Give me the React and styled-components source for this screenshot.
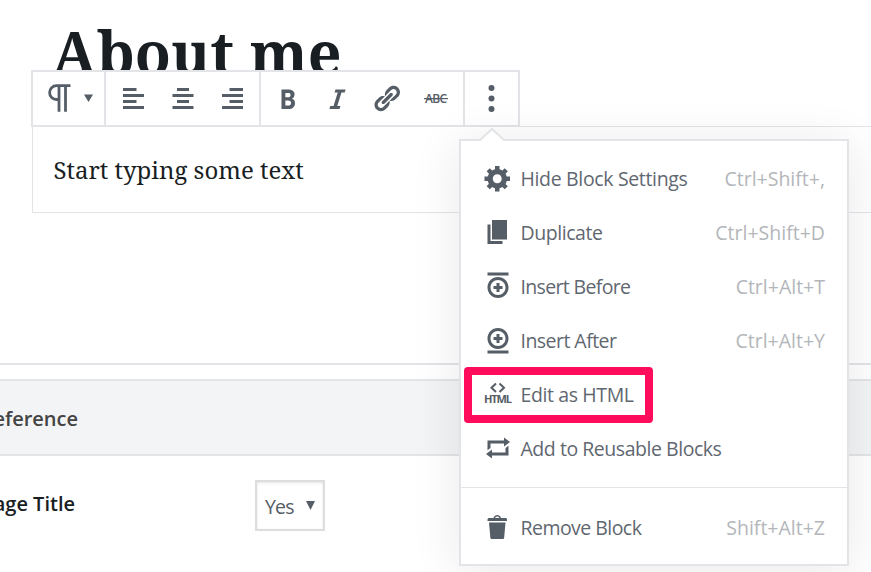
import React from "react";
import styled, { createGlobalStyle } from "styled-components";

const GlobalStyle = createGlobalStyle`
  * { box-sizing: border-box; }
  html, body { margin: 0; background: #fff; }
  body { overflow: hidden; font-family: "Open Sans", "Noto Sans", sans-serif; color: #555d66; }
`;

const Page = styled.main`
  position: relative;
  width: 871px;
  height: 572px;
  overflow: hidden;
  display: flex;
  flex-direction: column;
`;

const Title = styled.h1`
  margin: 0;
  height: 126px;
  padding: 10px 0 0 52px;
  font: 700 59px/84px "Noto Serif", "DejaVu Serif Condensed", "DejaVu Serif", serif;
  color: #191e23;
  white-space: nowrap;
`;

const Block = styled.section`
  height: 87px;
  margin: 0 -2px 150px 32px;
  padding: 22px 20.5px;
  border: 1px solid #e2e4e7;
`;

const Paragraph = styled.p`
  margin: 0;
  font: 400 24px/42px "Noto Serif", "DejaVu Serif Condensed", "DejaVu Serif", serif;
  color: #191e23;
  white-space: nowrap;
`;

const MetaArea = styled.section`
  border-top: 2px solid #e2e4e7;
  padding-top: 14px;
`;

const MetaHeader = styled.h2`
  margin: 0;
  height: 77px;
  padding-top: 2px;
  display: flex;
  align-items: center;
  border: solid #e2e4e7;
  border-width: 2px 0;
  background: #f3f4f5;
  color: #444;
  font-size: 20px;
  font-weight: 600;
`;

const Clipped = styled.span`
  width: ${(p) => p.$width}px;
  display: flex;
  justify-content: flex-end;
  white-space: nowrap;
`;

const Field = styled.div`
  display: flex;
  align-items: center;
  padding-top: 24px;
  color: #191e23;
  font-size: 20px;
  line-height: 27px;
  font-weight: 600;

  ${Clipped} { padding-bottom: 4px; }
`;

const Select = styled.button`
  width: 70px;
  height: 51px;
  margin-left: 180px;
  padding: 1px 8px 0 8px;
  display: flex;
  align-items: center;
  justify-content: space-between;
  border: 2px solid #ddd;
  background: #fff;
  box-shadow: inset 0 1px 3px rgba(0, 0, 0, 0.1);
  color: #555d66;
  font: 400 19.5px "Open Sans", sans-serif;
  letter-spacing: -0.8px;
`;

const Toolbar = styled.div`
  position: absolute;
  left: 31px;
  top: 70px;
  height: 57px;
  display: flex;
  background: #fff;
  border: 2px solid #e2e4e7;
`;

const ToolGroup = styled.div`
  width: ${(p) => p.$width}px;
  padding: 11px 0 0 ${(p) => p.$inset}px;
  display: flex;
  align-items: flex-start;
  gap: 20px;
  & + & { border-left: 2px solid #e2e4e7; }
`;

const Glyph = styled.svg`
  display: block;
  flex: none;
  width: ${(p) => p.$w || 30}px;
  height: ${(p) => p.$h || 30}px;
  fill: #555d66;
  overflow: visible;
`;

const Popover = styled.div`
  position: absolute;
  left: 459px;
  top: 139px;
  width: 390px;
  height: 427px;
  background: #fff;
  border: 2px solid #e2e4e7;
  box-shadow: 0 4.5px 45px rgba(25, 30, 35, 0.1);
`;

const Arrow = styled.svg`
  position: absolute;
  left: 18px;
  top: -13px;
  width: 26px;
  height: 14px;
`;

const MenuGroup = styled.div`
  padding: ${(p) => p.$pad};
  & + & { border-top: 1px solid #e2e4e7; }
`;

const MenuItem = styled.div`
  height: 54px;
  padding: 0 22px;
  display: flex;
  align-items: center;
  position: relative;
  font-size: 19.5px;
  font-weight: 400;
  white-space: nowrap;
`;

const Label = styled.span`
  margin-left: 7.5px;
  color: #5f6770;
  letter-spacing: ${(p) => p.$spacing}px;
`;

const Shortcut = styled.span`
  margin-left: auto;
  color: #b3b6ba;
  letter-spacing: ${(p) => p.$spacing}px;
`;

const Highlight = styled.div`
  position: absolute;
  left: 3px;
  top: 0;
  width: 189px;
  height: 56px;
  border: 8px solid #ff0c5c;
  border-radius: 4px;
`;

const icons = {
  left: "M12 5V3H3v2h9zm5 4V7H3v2h14zm-5 4v-2H3v2h9zm5 4v-2H3v2h14z",
  center: "M14 5V3H6v2h8zm3 4V7H3v2h14zm-3 4v-2H6v2h8zm3 4v-2H3v2h14z",
  right: "M17 5V3H8v2h9zm0 4V7H3v2h14zm0 4v-2H8v2h9zm0 4v-2H3v2h14z",
  bold: "M6 4v13h4.54c1.37 0 2.46-.33 3.26-1 .8-.66 1.2-1.58 1.2-2.77 0-.84-.17-1.51-.51-2.01s-.9-.85-1.67-1.03v-.09c.57-.1 1.02-.4 1.36-.9s.51-1.13.51-1.91c0-1.14-.39-1.98-1.17-2.5C12.75 4.26 11.5 4 9.78 4H6zm2.57 5.15V6.26h1.36c.73 0 1.27.11 1.61.32.34.22.51.58.51 1.07 0 .54-.16.92-.47 1.15s-.82.35-1.51.35h-1.5zm0 2.19h1.6c1.44 0 2.16.53 2.16 1.61 0 .6-.17 1.05-.51 1.34s-.86.43-1.57.43H8.57v-3.38z",
  italic: "M14.78 6h-2.13l-2.8 9h2.12l-.62 2H4.6l.62-2h2.14l2.8-9H8.03l.62-2h6.75z",
  link: "M17.74 2.76c1.68 1.69 1.68 4.41 0 6.1l-1.53 1.52c-1.12 1.12-2.7 1.47-4.14 1.09l2.62-2.61.76-.77.76-.76c.84-.84.84-2.2 0-3.04-.84-.85-2.2-.85-3.04 0l-.77.76-3.38 3.38c-.37-1.44-.02-3.02 1.1-4.14l1.52-1.53c1.69-1.68 4.42-1.68 6.1 0zM8.59 13.43l5.34-5.34c.42-.42.42-1.1 0-1.52-.44-.43-1.13-.39-1.53 0l-5.33 5.34c-.42.42-.42 1.1 0 1.52.44.43 1.13.39 1.52 0zm-.76 2.29l4.14-4.15c.38 1.44.03 3.02-1.09 4.14l-1.52 1.53c-1.69 1.68-4.41 1.68-6.1 0-1.68-1.68-1.68-4.42 0-6.1l1.53-1.52c1.12-1.12 2.7-1.47 4.14-1.1l-4.14 4.15c-.85.84-.85 2.2 0 3.05.84.84 2.2.84 3.04 0z",
  gear: "M18 12h-2.18c-.17.7-.44 1.35-.81 1.93l1.54 1.54-2.1 2.1-1.54-1.54c-.58.36-1.23.63-1.91.79V19H8v-2.18c-.68-.16-1.33-.43-1.91-.79l-1.54 1.54-2.12-2.12 1.54-1.54c-.36-.58-.63-1.23-.79-1.91H1V9.03h2.17c.16-.7.44-1.35.8-1.94L2.43 5.55l2.1-2.1 1.54 1.54c.58-.37 1.24-.64 1.93-.81V2h3v2.18c.68.16 1.33.43 1.91.79l1.54-1.54 2.12 2.12-1.54 1.54c.36.59.64 1.24.8 1.94H18V12zm-8.5 1.5c1.66 0 3-1.34 3-3s-1.34-3-3-3-3 1.34-3 3 1.34 3 3 3z",
  duplicate: "M6 15V2h10v13H6zm-1 1h8v2H3V5h2v11z",
  before: "M11 8H9v2H7v2h2v2h2v-2h2v-2h-2V8zm-1-4c-3.9 0-7 3.1-7 7s3.1 7 7 7 7-3.1 7-7-3.1-7-7-7zm0 12c-2.8 0-5-2.2-5-5s2.2-5 5-5 5 2.2 5 5-2.2 5-5 5zM3 1h14v2H3V1z",
  after: "M9 12h2v-2h2V8h-2V6H9v2H7v2h2v2zm1 4c3.9 0 7-3.1 7-7s-3.1-7-7-7-7 3.1-7 7 3.1 7 7 7zm0-12c2.8 0 5 2.2 5 5s-2.2 5-5 5-5-2.2-5-5 2.2-5 5-5zM3 19h14v-2H3v2z",
  reusable: "M5 7v3l-2 1.5V5h11V3l4 3.01L14 9V7H5zm10 6v-3l2-1.5V15H6v2l-4-3.01L6 11v2h9z",
  trash: "M12 4h3c.6 0 1 .4 1 1v1H3V5c0-.6.5-1 1-1h3c.2-1.1 1.3-2 2.5-2s2.3.9 2.5 2zM8 4h3c-.2-.6-.9-1-1.5-1S8.2 3.4 8 4zM4 7h11l-.9 10.1c0 .5-.5.9-1 .9H5.9c-.5 0-.9-.4-1-.9L4 7z",
};

/* dx and dy nudge the drawing by fractions of a pixel inside its box. */
const Icon = ({ name, dx = 0, dy = 0 }) => (
  <Glyph viewBox={`${-dx / 1.5} ${-dy / 1.5} 20 20`}><path d={icons[name]} /></Glyph>
);

const ParagraphIcon = () => (
  <Glyph $w={42} viewBox="0 0 42 30">
    <path d="M23.500 2.700H9.500a6.700 6.700 0 0 0 0 13.800H11.500M12 2.700V28.700M18.500 2.700V28.700" fill="none" stroke="#555d66" strokeWidth="2.800" />
    <path d="M37 11.500h9l-4.500 7.500z" />
  </Glyph>
);

const StrikeIcon = () => (
  <Glyph viewBox="0 0 30 30">
    <text x="3" y="20" fontSize="12" fontFamily="Open Sans" fontWeight="600" textLength="22">ABC</text>
    <path d="M2 15h24v1.200H2z" />
  </Glyph>
);

const MoreIcon = () => (
  <Glyph viewBox="0 0 30 30">
    <circle cx="14.500" cy="5" r="3" />
    <circle cx="14.500" cy="15.500" r="3" />
    <circle cx="14.500" cy="26" r="3" />
  </Glyph>
);

const HtmlIcon = () => (
  <Glyph viewBox="0 0 30 30">
    <path d="M13 4.500l-4.500 4.200 4.500 4.200M16.500 4.500l4.500 4.200-4.500 4.200" fill="none" stroke="#555d66" strokeWidth="2" />
    <text x="1" y="24" fontSize="11" fontFamily="Open Sans" fontWeight="700" textLength="28">HTML</text>
  </Glyph>
);

const menu = [
  { icon: "gear", label: "Hide Block Settings", keys: "Ctrl+Shift+,", ls: -0.34, ks: 0 },
  { icon: "duplicate", label: "Duplicate", keys: "Ctrl+Shift+D", ls: -0.45, ks: 0 },
  { icon: "before", label: "Insert Before", keys: "Ctrl+Alt+T", ls: -0.66, ks: 0 },
  { icon: "after", label: "Insert After", keys: "Ctrl+Alt+Y", ls: -0.54, ks: 0 },
  { icon: "html", label: "Edit as HTML", ls: -0.38, highlighted: true },
  { icon: "reusable", label: "Add to Reusable Blocks", ls: -0.46 },
];
const removal = { icon: "trash", label: "Remove Block", keys: "Shift+Alt+Z", ls: -0.54, ks: 0 };

const Item = ({ icon, label, keys, ls, ks, highlighted }) => (
  <MenuItem>
    {icon === "html" ? <HtmlIcon /> : <Icon name={icon} />}
    <Label $spacing={ls}>{label}</Label>
    {keys && <Shortcut $spacing={ks}>{keys}</Shortcut>}
    {highlighted && <Highlight />}
  </MenuItem>
);

export default function App() {
  return (
    <Page>
      <GlobalStyle />
      <Title>About me</Title>
      <Block><Paragraph>Start typing some text</Paragraph></Block>
      <MetaArea>
        <MetaHeader><Clipped $width={78}>Preference</Clipped></MetaHeader>
        <Field>
          <Clipped $width={75}>Page Title</Clipped>
          <Select>Yes<Glyph $w={9} $h={11} viewBox="0 0 9 11"><path d="M0 0h9L4.500 9z" /></Glyph></Select>
        </Field>
      </MetaArea>
      <Toolbar>
        <ToolGroup $width={71} $inset={14}><ParagraphIcon /></ToolGroup>
        <ToolGroup $width={155} $inset={12}>
          <Icon name="left" dx={0.5} dy={0.5} />
          <Icon name="center" dy={0.5} />
          <Icon name="right" dx={-0.5} dy={0.5} />
        </ToolGroup>
        <ToolGroup $width={204} $inset={11}>
          <Icon name="bold" dx={0.5} dy={0.5} />
          <Icon name="italic" dx={0.5} dy={0.5} />
          <Icon name="link" dx={-0.5} dy={0.5} />
          <StrikeIcon />
        </ToolGroup>
        <ToolGroup $width={55} $inset={12}><MoreIcon /></ToolGroup>
      </Toolbar>
      <Popover>
        <Arrow viewBox="0 0 26 14">
          <path d="M0 14L13 1.500L26 14z" fill="#fff" />
          <path d="M0.500 12.500L13 1L25.500 12.500" fill="none" stroke="#e2e4e7" strokeWidth="2" />
        </Arrow>
        <MenuGroup $pad="10px 0 12px">{menu.map((m) => <Item key={m.label} {...m} />)}</MenuGroup>
        <MenuGroup $pad="12px 0 0"><Item {...removal} /></MenuGroup>
      </Popover>
    </Page>
  );
}
